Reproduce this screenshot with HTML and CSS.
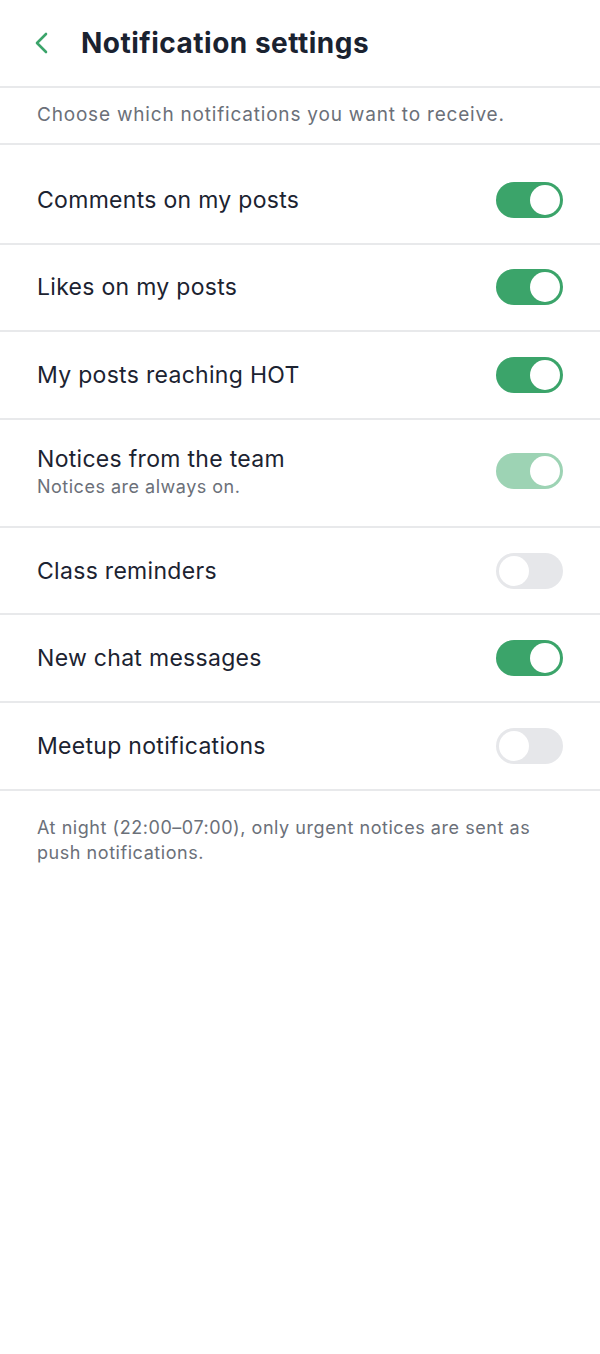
FILE: index.html
```html
<!DOCTYPE html>
<html lang="en">
<head>
    <meta charset="UTF-8">
    <meta name="viewport" content="width=device-width, initial-scale=1.0">
    <title>Notification settings</title>
    <link rel="stylesheet" href="styles.css">
</head>
<body>
    <div class="header">
        <button class="back" aria-label="Back">
            <svg width="16" height="22" viewBox="0 0 16 22" fill="none">
                <path d="M12 2L3 11L12 20" stroke="#3ba46a" stroke-width="2.6" stroke-linecap="round" stroke-linejoin="round"/>
            </svg>
        </button>
        <h1 class="title">Notification settings</h1>
    </div>

    <p class="intro">Choose which notifications you want to receive.</p>

    <div class="list">
        <div class="row">
            <div class="label">Comments on my posts</div>
            <span class="toggle on"></span>
        </div>
        <div class="row">
            <div class="label">Likes on my posts</div>
            <span class="toggle on"></span>
        </div>
        <div class="row">
            <div class="label">My posts reaching HOT</div>
            <span class="toggle on"></span>
        </div>
        <div class="row">
            <div>
                <div class="label">Notices from the team</div>
                <div class="hint">Notices are always on.</div>
            </div>
            <span class="toggle on locked"></span>
        </div>
        <div class="row">
            <div class="label">Class reminders</div>
            <span class="toggle"></span>
        </div>
        <div class="row">
            <div class="label">New chat messages</div>
            <span class="toggle on"></span>
        </div>
        <div class="row">
            <div class="label">Meetup notifications</div>
            <span class="toggle"></span>
        </div>
    </div>

    <p class="footnote">At night (22:00–07:00), only urgent notices are sent as push notifications.</p>
</body>
</html>
```

FILE: styles.css
```css
body {
    margin: 0;
    background: #fff;
    font-family: Inter, "Noto Sans", sans-serif;
    color: #1c2331;
}

.header {
    display: flex;
    align-items: center;
    height: 86px;
    border-bottom: 2px solid #e8e9eb;
}

.back {
    display: flex;
    align-items: center;
    justify-content: center;
    width: 81px;
    height: 86px;
    padding: 0 0 0 2px;
    border: none;
    background: none;
}

.title {
    margin: 0;
    font-size: 28px;
    font-weight: 700;
    letter-spacing: 0.5px;
    color: #1a2230;
}

.intro {
    margin: 0;
    padding: 0 37px;
    height: 55px;
    line-height: 53px;
    font-size: 19px;
    letter-spacing: 0.8px;
    color: #6b7079;
    border-bottom: 2px solid #e8e9eb;
}

.list {
    padding-top: 12px;
}

.row {
    display: flex;
    align-items: center;
    justify-content: space-between;
    min-height: 85.6px;
    padding: 0 37px;
    border-bottom: 2px solid #e8e9eb;
}

.row:has(.hint) {
    min-height: 108px;
    padding-bottom: 4px;
    box-sizing: border-box;
}

.label {
    font-size: 23px;
    letter-spacing: 0.3px;
    color: #1c2331;
}

.hint {
    margin-top: 3px;
    font-size: 18px;
    letter-spacing: 0.5px;
    color: #6b7079;
}

.toggle {
    position: relative;
    flex-shrink: 0;
    width: 67px;
    height: 36px;
    border-radius: 18px;
    background: #e6e7ea;
}

.toggle::after {
    content: "";
    position: absolute;
    top: 3px;
    left: 3px;
    width: 30px;
    height: 30px;
    border-radius: 50%;
    background: #fff;
}

.toggle.on {
    background: #3ba46a;
}

.toggle.on::after {
    left: 34px;
}

.toggle.locked {
    background: #9dd3b4;
}

.footnote {
    margin: 0;
    padding: 24px 37px;
    font-size: 18px;
    line-height: 25px;
    letter-spacing: 0.55px;
    color: #6b7079;
}
```
